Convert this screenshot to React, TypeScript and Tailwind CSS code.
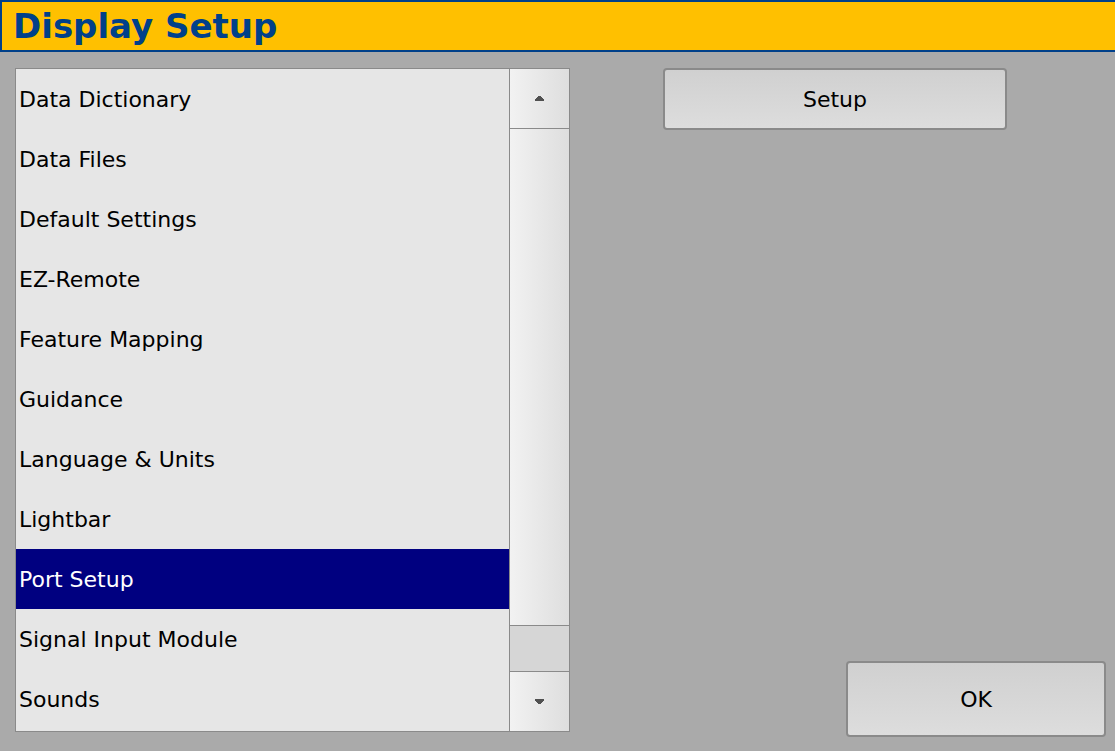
import React from "react";

const items = [
  "Data Dictionary",
  "Data Files",
  "Default Settings",
  "EZ-Remote",
  "Feature Mapping",
  "Guidance",
  "Language & Units",
  "Lightbar",
  "Port Setup",
  "Signal Input Module",
  "Sounds",
];

export default function App() {
  return (
    <div
      className="w-[1115px] h-[751px] bg-[#aaaaaa] overflow-hidden flex flex-col"
      style={{ fontFamily: '"DejaVu Sans", sans-serif' }}
    >
      <div className="h-[52px] bg-[#ffc000] border-2 border-r-0 border-[#00408a] flex items-center pl-[11px] shrink-0">
        <span className="text-[#00408a] font-bold text-[34px] leading-none">Display Setup</span>
      </div>
      <div className="flex flex-1 pt-[16px]">
        <div className="ml-[15px] w-[555px] h-[664px] border border-[#8a8a8a] bg-[#e6e6e6] flex">
          <div className="w-[493px] flex flex-col">
            {items.map((t) => (
              <div
                key={t}
                className={
                  "h-[60px] flex items-center pl-[3px] text-[22px] shrink-0 " +
                  (t === "Port Setup" ? "bg-[#000080] text-white" : "text-black")
                }
              >
                {t}
              </div>
            ))}
          </div>
          <div className="w-[60px] border-l border-[#8a8a8a] flex flex-col">
            <div className="h-[60px] border-b border-[#8a8a8a] bg-gradient-to-r from-[#f2f2f2] to-[#dedede] flex items-center justify-center">
              <svg width="9" height="5" viewBox="0 0 9 5">
                <path d="M3 0h3v1h1v1h1v1h1v2H0V3h1V2h1V1h1z" fill="#505050" />
              </svg>
            </div>
            <div className="flex-1 bg-gradient-to-r from-[#f2f2f2] to-[#dedede] border-b border-[#8a8a8a]" />
            <div className="h-[46px] bg-[#d6d6d6] border-b border-[#8a8a8a]" />
            <div className="h-[59px] bg-gradient-to-r from-[#f2f2f2] to-[#dedede] flex items-center justify-center">
              <svg width="9" height="5" viewBox="0 0 9 5">
                <path d="M0 0h9v2H8v1H7v1H6v1H3V4H2V3H1V2H0z" fill="#505050" />
              </svg>
            </div>
          </div>
        </div>
        <div className="flex-1 flex flex-col justify-between pb-[14px]">
          <div className="flex ml-[93px]">
            <div className="w-[344px] h-[62px] rounded-[4px] border-2 border-[#8a8a8a] bg-gradient-to-b from-[#d0d0d0] to-[#dddddd] flex items-center justify-center text-[22px] text-black">
              Setup
            </div>
          </div>
          <div className="flex justify-end mr-[9px]">
            <div className="w-[260px] h-[76px] rounded-[4px] border-2 border-[#8a8a8a] bg-gradient-to-b from-[#d0d0d0] to-[#dddddd] flex items-center justify-center text-[22px] text-black">
              OK
            </div>
          </div>
        </div>
      </div>
    </div>
  );
}
